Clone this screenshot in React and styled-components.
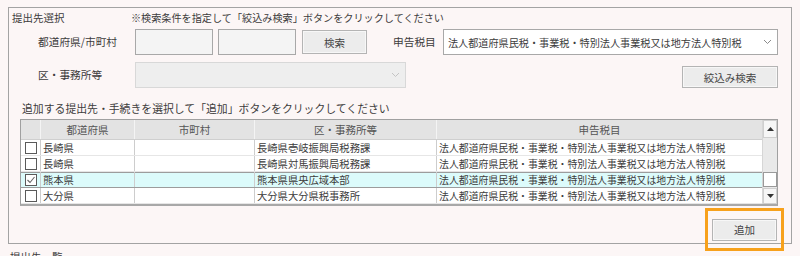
import styled, { createGlobalStyle } from 'styled-components';

const Page = createGlobalStyle`
  body {
    margin: 0;
    background: #fcf6f6;
    font-family: "Noto Sans CJK JP", "Noto Sans", sans-serif;
    color: #3c3c3c;
  }
`;

const Screen = styled.div`
  width: 800px;
  height: 256px;
  overflow: hidden;
`;

const Frame = styled.div`
  margin: 7px 0 0 8px;
  width: 784px;
  height: 237px;
  box-sizing: border-box;
  border: 1px solid #a3a3a3;
  display: flex;
  flex-direction: column;
`;

const TitleRow = styled.div`
  display: flex;
  align-items: center;
  height: 19px;
  padding-left: 3px;
  font-size: 10.5px;
  white-space: nowrap;
`;

const Title = styled.span`
  width: 119px;
`;

const Hint = styled.span`
  font-size: 10.15px;
`;

const FormRow = styled.div`
  display: flex;
  align-items: flex-start;
  height: 26px;
  margin-top: ${(p) => p.$top}px;
  padding-left: 29px;
  padding-right: 13px;
`;

const Label = styled.span`
  width: ${(p) => p.$w}px;
  margin-left: ${(p) => p.$ml || 0}px;
  line-height: 26px;
  font-size: 10.7px;
  white-space: nowrap;
`;

const TextBox = styled.div`
  width: 78px;
  height: 26px;
  box-sizing: border-box;
  border: 1px solid #a8a8a8;
  background: #f4f4f4;
  margin-right: ${(p) => p.$mr || 0}px;
`;

const Button = styled.button`
  width: ${(p) => p.$w}px;
  height: ${(p) => p.$h}px;
  margin-top: ${(p) => p.$top || 0}px;
  box-sizing: border-box;
  border: 1px solid #b4b4b4;
  box-shadow: inset 0 0 0 1px #f7f7f7;
  background: #ececec;
  font-family: inherit;
  font-size: 10.5px;
  color: #444;
  padding: 0;
`;

const Select = styled.div`
  width: ${(p) => p.$w}px;
  height: 26px;
  box-sizing: border-box;
  margin-left: ${(p) => p.$ml || 0}px;
  border: 1px solid ${(p) => (p.$disabled ? '#d8d8d8' : '#a8a8a8')};
  background: ${(p) => (p.$disabled ? '#eeeeee' : '#ffffff')};
  display: flex;
  align-items: center;
  justify-content: space-between;
  padding: 0 5px 0 4px;
  font-size: 10.15px;
  white-space: nowrap;
`;

const Spacer = styled.div`
  flex: 1;
`;

const Instruction = styled.div`
  margin-top: 11px;
  height: 19px;
  line-height: 19px;
  padding-left: 13px;
  font-size: 10.85px;
  white-space: nowrap;
`;

const Table = styled.div`
  margin: 1px 0 0 11px;
  width: 758px;
  height: 87px;
  box-sizing: border-box;
  border: 1px solid #a0a0a0;
  border-bottom: 2px solid #a8a8a8;
  display: flex;
  background: #ffffff;
`;

const Grid = styled.div`
  width: 741px;
  display: flex;
  flex-direction: column;
`;

const Row = styled.div`
  display: grid;
  grid-template-columns: 20px 94px 120px 182px 325px;
  height: ${(p) => (p.$head ? 20 : 16)}px;
  box-sizing: border-box;
  background: ${(p) => (p.$head ? '#e3e3e3' : p.$selected ? '#dcfbfb' : '#ffffff')};
  border-bottom: 1px solid ${(p) => (p.$head ? '#cfcfcf' : '#e6e6e6')};
  box-shadow: ${(p) => (p.$selected ? 'inset 0 1px #9c9c9c' : 'none')};
  ${(p) => p.$selected && 'border-bottom-color: #9c9c9c;'}
`;

const Cell = styled.div`
  border-right: 1px solid ${(p) => (p.$head ? '#f4f4f4' : '#cdcdcd')};
  font-size: ${(p) => (p.$head ? 10.5 : 10.3)}px;
  line-height: ${(p) => (p.$head ? 20 : 15)}px;
  text-align: ${(p) => (p.$head ? 'center' : 'left')};
  color: ${(p) => (p.$head ? '#555' : '#3c3c3c')};
  padding-left: ${(p) => (p.$head ? 0 : 2)}px;
  white-space: nowrap;
  overflow: hidden;
  display: ${(p) => (p.$check ? 'flex' : 'block')};
  align-items: center;
  &:last-child {
    border-right: none;
  }
`;

const TaxText = styled.span`
  font-size: 9.9px;
`;

const Box = styled.span`
  width: 12px;
  height: 12px;
  margin-left: 2px;
  box-sizing: border-box;
  border: 1px solid #5a5a5a;
  background: #fff;
  display: flex;
  align-items: center;
  justify-content: center;
`;

const ScrollBar = styled.div`
  width: 15px;
  display: flex;
  flex-direction: column;
  background: #e9e9e9;
  border-left: 1px solid #d6d6d6;
  box-sizing: border-box;
`;

const Arrow = styled.div`
  height: ${(p) => p.$h}px;
  box-sizing: border-box;
  border: 1px solid #cfcfcf;
  background: #f6f6f6;
  display: flex;
  align-items: center;
  justify-content: center;
`;

const Track = styled.div`
  flex: 1;
  display: flex;
  flex-direction: column;
  justify-content: flex-end;
`;

const Thumb = styled.div`
  height: 15px;
  margin: 0 0 1px 0;
  box-sizing: border-box;
  border: 1px solid #9a9a9a;
  background: #ffffff;
`;

const ButtonRow = styled.div`
  display: flex;
  justify-content: flex-end;
  margin-top: 9px;
  padding-right: 14px;
`;

const AddWrap = styled.div`
  position: relative;
`;

const Highlight = styled.span`
  position: absolute;
  top: -7px;
  left: -7px;
  right: -7px;
  bottom: -10px;
  border: 3px solid #f7a11c;
  pointer-events: none;
`;

const Footer = styled.div`
  margin: 4px 0 0 10px;
  font-size: 10.5px;
  line-height: 18px;
  white-space: nowrap;
`;

const Chevron = ({ color }) => (
  <svg width="9" height="6" viewBox="0 0 9 6">
    <path d="M1 1 L4.5 4.5 L8 1" fill="none" stroke={color} strokeWidth="1" />
  </svg>
);

const Tick = () => (
  <svg width="10" height="10" viewBox="0 0 10 10">
    <path d="M1.5 5 L4 7.5 L8.5 2" fill="none" stroke="#666" strokeWidth="1.1" />
  </svg>
);

const Tri = ({ up }) => (
  <svg width="7" height="4" viewBox="0 0 7 4">
    <path d={up ? 'M0 4 L3.5 0 L7 4 Z' : 'M0 0 L3.5 4 L7 0 Z'} fill="#333" />
  </svg>
);

const TAX = '法人都道府県民税・事業税・特別法人事業税又は地方法人特別税';

const rows = [
  { pref: '長崎県', office: '長崎県壱岐振興局税務課' },
  { pref: '長崎県', office: '長崎県対馬振興局税務課' },
  { pref: '熊本県', office: '熊本県県央広域本部', checked: true },
  { pref: '大分県', office: '大分県大分県税事務所' },
];

export default function App() {
  return (
    <Screen>
      <Page />
      <Frame>
        <TitleRow>
          <Title>提出先選択</Title>
          <Hint>※検索条件を指定して「絞込み検索」ボタンをクリックしてください</Hint>
        </TitleRow>

        <FormRow $top={2}>
          <Label $w={97}>都道府県/市町村</Label>
          <TextBox $mr={5} />
          <TextBox $mr={6} />
          <Button $w={65} $h={24} $top={1}>検索</Button>
          <Label $w={50} $ml={26}>申告税目</Label>
          <Select $w={335}>
            <span>{TAX}</span>
            <Chevron color="#8a8a8a" />
          </Select>
        </FormRow>

        <FormRow $top={7}>
          <Label $w={97}>区・事務所等</Label>
          <Select $w={271} $disabled>
            <span />
            <Chevron color="#c4c4c4" />
          </Select>
          <Spacer />
          <Button $w={96} $h={22} $top={4}>絞込み検索</Button>
        </FormRow>

        <Instruction>追加する提出先・手続きを選択して「追加」ボタンをクリックしてください</Instruction>

        <Table>
          <Grid>
            <Row $head>
              <Cell $head />
              <Cell $head>都道府県</Cell>
              <Cell $head>市町村</Cell>
              <Cell $head>区・事務所等</Cell>
              <Cell $head>申告税目</Cell>
            </Row>
            {rows.map((r, i) => (
              <Row key={i} $selected={r.checked}>
                <Cell $check>
                  <Box>{r.checked && <Tick />}</Box>
                </Cell>
                <Cell>{r.pref}</Cell>
                <Cell />
                <Cell>{r.office}</Cell>
                <Cell>
                  <TaxText>{TAX}</TaxText>
                </Cell>
              </Row>
            ))}
          </Grid>
          <ScrollBar>
            <Arrow $h={18}>
              <Tri up />
            </Arrow>
            <Track>
              <Thumb />
            </Track>
            <Arrow $h={16}>
              <Tri />
            </Arrow>
          </ScrollBar>
        </Table>

        <ButtonRow>
          <AddWrap>
            <Button $w={65} $h={22}>追加</Button>
            <Highlight />
          </AddWrap>
        </ButtonRow>
      </Frame>
      <Footer>提出先一覧</Footer>
    </Screen>
  );
}
